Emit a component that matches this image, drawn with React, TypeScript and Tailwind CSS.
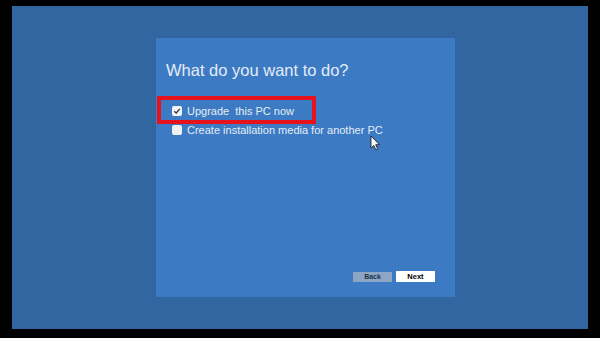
export default function App() {
  return (
    <div className="w-[600px] h-[338px] bg-black overflow-hidden font-['Liberation_Sans',Arial,sans-serif]">
      {/* blue screen */}
      <div className="ml-[12px] mt-[6px] w-[576px] h-[323px] bg-[#3266a1] pt-[32px] pl-[144px]">
        {/* setup dialog */}
        <div className="relative w-[299px] h-[259px] bg-[#3c7bc3] flex flex-col pt-[22px] pl-[10px] pr-[20px] pb-[15px]">
          <h1 className="text-[16.5px] leading-[20px] text-[#e4ecf6]">What do you want to do?</h1>

          <div className="mt-[22px] ml-[6px] flex flex-col">
            <label className="flex items-center gap-[5px] h-[18.5px] text-[11px] text-[#e4ecf6]">
              <span className="w-[10px] h-[10px] rounded-[2px] bg-[#f2f4f8] flex items-center justify-center">
                <svg width="8" height="8" viewBox="0 0 8 8">
                  <path d="M1.3 4.2 L3.2 6 L6.8 1.8" fill="none" stroke="#2c3440" strokeWidth="1.3" />
                </svg>
              </span>
              <span className="whitespace-pre">Upgrade  this PC now</span>
            </label>
            <label className="flex items-center gap-[5px] h-[18.5px] text-[11px] text-[#e4ecf6]">
              <span className="w-[10px] h-[10px] rounded-[2px] bg-[#eef0f4]" />
              <span>Create installation media for another PC</span>
            </label>
          </div>

          <div className="flex-1" />

          {/* buttons */}
          <div className="flex justify-end items-end gap-[4px]">
            <button className="w-[39px] h-[10px] bg-[#8ea6c6] text-[7px] leading-[10px] font-semibold text-[#22324a] mb-[0.5px]">Back</button>
            <button className="w-[39px] h-[11px] bg-white text-[7.5px] leading-[11px] font-semibold text-black">Next</button>
          </div>

          {/* red highlight */}
          <div className="absolute left-[1px] top-[58px] w-[159px] h-[28px] border-4 border-[#e8121c]" />

          {/* mouse pointer */}
          <svg className="absolute left-[214px] top-[97px]" width="11" height="16" viewBox="0 0 11 16">
            <path d="M1 1 L1 13 L3.8 10.4 L5.8 14.8 L7.6 14 L5.7 9.7 L9.5 9.7 Z" fill="white" stroke="#222" strokeWidth="0.9" strokeLinejoin="round" />
          </svg>
        </div>
      </div>
    </div>
  );
}
